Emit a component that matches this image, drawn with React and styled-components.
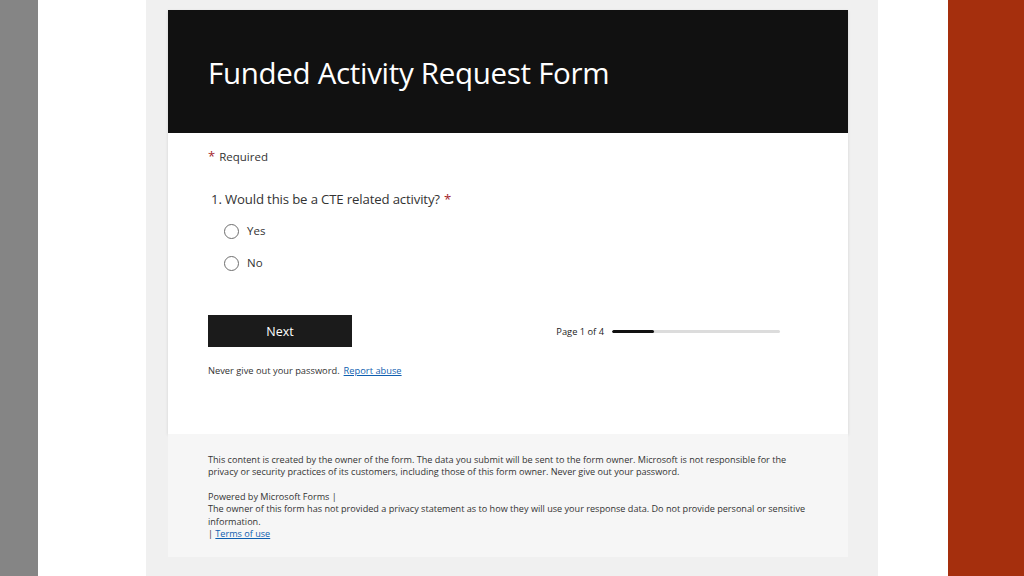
import React from "react";
import styled, { createGlobalStyle } from "styled-components";

const GlobalStyle = createGlobalStyle`
  html, body {
    margin: 0;
    padding: 0;
    background: #ffffff;
  }
  body {
    font-family: "Open Sans", "Noto Sans", "Liberation Sans", sans-serif;
  }
`;

const Stage = styled.div`
  width: 1024px;
  height: 576px;
  display: flex;
  overflow: hidden;
`;

const Strip = styled.div`
  flex: 0 0 ${(p) => p.w}px;
  background: ${(p) => p.bg};
`;

const Panel = styled.div`
  flex: 0 0 732px;
  min-width: 0;
  overflow: hidden;
  background: #f0f0f0;
  padding: 10px 30px 0 22px;
  box-sizing: border-box;
  display: flex;
  flex-direction: column;
`;

const Card = styled.div`
  background: #ffffff;
  box-shadow: 0 1px 3px rgba(0, 0, 0, 0.12);
  display: flex;
  flex-direction: column;
`;

const Header = styled.div`
  height: 123px;
  background: #111111;
  display: flex;
  align-items: center;
  padding: 0 40px 0 40px;
`;

const Title = styled.h1`
  margin: 0;
  color: #ffffff;
  font-weight: 400;
  font-size: 29.5px;
  letter-spacing: -0.3px;
  padding-top: 2px;
`;

const Body = styled.div`
  padding: 15px 40px 0 40px;
  height: 301px;
  box-sizing: border-box;
  color: #333333;
`;

const Required = styled.div`
  font-size: 11.5px;
  line-height: 16px;
`;

const Star = styled.span`
  color: #a4262c;
  font-size: 13px;
  margin-right: 4px;
`;

const Question = styled.div`
  margin-top: 25px;
  padding-left: 3px;
  font-size: 13.2px;
  line-height: 18px;
  color: #333333;
  letter-spacing: -0.15px;
`;

const QStar = styled.span`
  color: #a4262c;
  margin-left: 4px;
`;

const Options = styled.div`
  margin-top: 15px;
  padding-left: 16px;
  display: flex;
  flex-direction: column;
  gap: 16px;
`;

const Option = styled.label`
  display: flex;
  align-items: center;
  gap: 8px;
  font-size: 11.5px;
  line-height: 16px;
  color: #333333;
`;

const Radio = styled.span`
  width: 13px;
  height: 13px;
  border: 1px solid #6e6e6e;
  border-radius: 50%;
  box-sizing: content-box;
`;

const ActionRow = styled.div`
  margin-top: 44px;
  display: flex;
  align-items: center;
`;

const NextButton = styled.button`
  width: 144px;
  height: 32px;
  border: none;
  background: #1b1b1b;
  color: #ffffff;
  font-family: inherit;
  font-size: 12.5px;
  padding: 0;
`;

const Progress = styled.div`
  margin-left: auto;
  margin-right: 28px;
  display: flex;
  align-items: center;
  gap: 8px;
  font-size: 9.3px;
  color: #222222;
`;

const Track = styled.div`
  width: 168px;
  height: 3px;
  border-radius: 2px;
  background: #dcdcdc;
  overflow: hidden;
`;

const Fill = styled.div`
  height: 100%;
  background: #111111;
  border-radius: 2px;
`;

const Note = styled.div`
  margin-top: 17px;
  font-size: 9.3px;
  line-height: 14px;
  color: #333333;
`;

const Link = styled.a`
  color: #0f5fb0;
  text-decoration: underline;
  margin-left: ${(p) => (p.$gap ? "4px" : "0")};
`;

const Footer = styled.div`
  background: #f6f6f6;
  height: 123px;
  padding: 20px 40px 0 40px;
  box-sizing: border-box;
  font-size: 9.1px;
  line-height: 12.4px;
  color: #333333;
`;

const Para = styled.p`
  margin: 0 0 12px 0;
  white-space: nowrap;
`;

export default function App() {
  const page = 1;
  const pages = 4;
  return (
    <>
      <GlobalStyle />
      <Stage>
        <Strip w={38} bg="#858585" />
        <Strip w={108} bg="#ffffff" />
        <Panel>
          <Card>
            <Header>
              <Title>Funded Activity Request Form</Title>
            </Header>
            <Body>
              <Required>
                <Star>*</Star>Required
              </Required>
              <Question>
                1. Would this be a CTE related activity?<QStar>*</QStar>
              </Question>
              <Options>
                <Option>
                  <Radio />
                  Yes
                </Option>
                <Option>
                  <Radio />
                  No
                </Option>
              </Options>
              <ActionRow>
                <NextButton>Next</NextButton>
                <Progress>
                  Page {page} of {pages}
                  <Track>
                    <Fill style={{ width: `${(page / pages) * 100}%` }} />
                  </Track>
                </Progress>
              </ActionRow>
              <Note>
                Never give out your password.
                <Link $gap href="#">Report abuse</Link>
              </Note>
            </Body>
          </Card>
          <Footer>
            <Para>
              This content is created by the owner of the form. The data you submit will be sent to the form owner. Microsoft is not responsible for the
              <br />
              privacy or security practices of its customers, including those of this form owner. Never give out your password.
            </Para>
            <Para>
              Powered by Microsoft Forms |
              <br />
              The owner of this form has not provided a privacy statement as to how they will use your response data. Do not provide personal or sensitive
              <br />
              information.
              <br />| <Link href="#">Terms of use</Link>
            </Para>
          </Footer>
        </Panel>
        <Strip w={70} bg="#ffffff" />
        <Strip w={76} bg="#a52f0d" />
      </Stage>
    </>
  );
}
